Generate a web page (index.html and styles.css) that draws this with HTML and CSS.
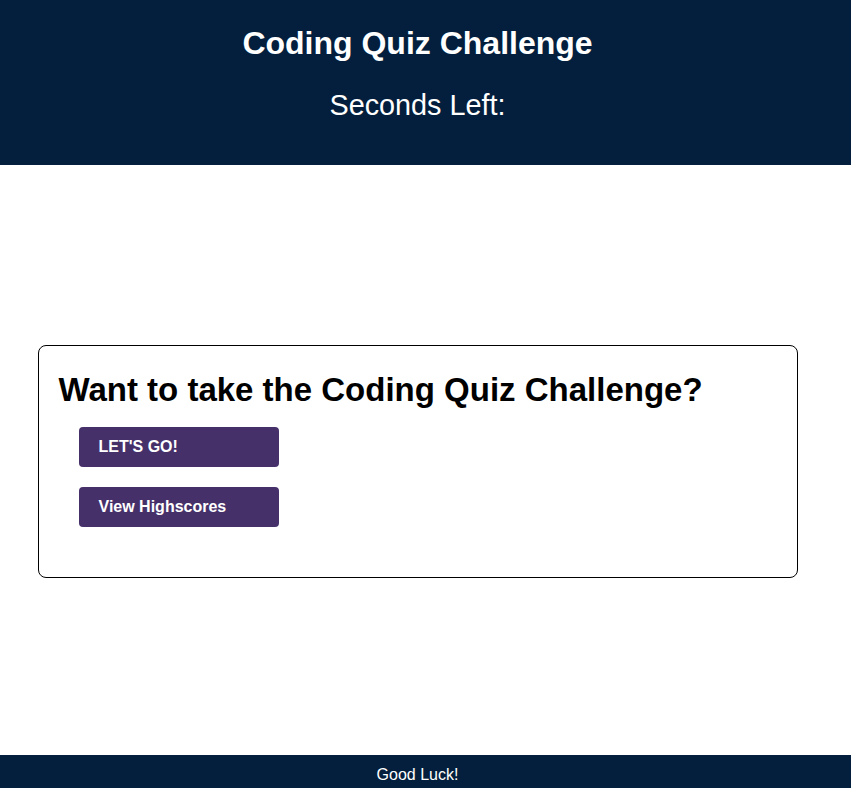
FILE: index.html
```html
<!DOCTYPE html>
<html lang="en">
<head>
<meta charset="utf-8">
<title>Coding Quiz Challenge</title>
<link rel="stylesheet" href="styles.css">
</head>
<body>
<header class="site-header">
  <h1 class="site-title">Coding Quiz Challenge</h1>
  <p class="timer">Seconds Left:</p>
</header>
<main class="main">
  <section class="card">
    <h2 class="card-title">Want to take the Coding Quiz Challenge?</h2>
    <div class="actions">
      <button class="btn" type="button">LET'S GO!</button>
      <button class="btn" type="button">View Highscores</button>
    </div>
  </section>
</main>
<footer class="site-footer">Good Luck!</footer>
</body>
</html>
```

FILE: styles.css
```css
html, body {
  margin: 0;
  padding: 0;
  height: 100%;
}
body {
  font-family: "Liberation Sans", Arial, Helvetica, sans-serif;
  display: flex;
  flex-direction: column;
  min-height: 100vh;
  background: #ffffff;
  color: #000000;
}
.site-header {
  background: #031f3d;
  color: #ffffff;
  text-align: center;
  height: 165px;
  box-sizing: border-box;
  padding: 24.5px 16px 0 0;
}
.site-title {
  font-size: 32px;
  font-weight: 700;
  margin: 0;
}
.timer {
  font-size: 28.8px;
  margin: 27px 0 0;
}
.main {
  flex: 1;
  display: flex;
  align-items: center;
  justify-content: center;
  padding: 3px 16px 0 0;
}
.card {
  box-sizing: border-box;
  width: 760px;
  border: 1px solid #000000;
  border-radius: 8px;
  padding: 25px 20px 50px;
}
.card-title {
  font-size: 33px;
  font-weight: 700;
  margin: 0;
}
.actions {
  display: flex;
  flex-direction: column;
  align-items: flex-start;
  gap: 20px;
  margin: 18px 0 0 20px;
}
.btn {
  width: 200px;
  height: 40px;
  box-sizing: border-box;
  border: none;
  border-radius: 4px;
  background: #46306a;
  color: #ffffff;
  font-family: "Liberation Sans", Arial, Helvetica, sans-serif;
  font-size: 16px;
  font-weight: 700;
  text-align: left;
  padding: 0 20px;
}
.site-footer {
  background: #031f3d;
  color: #ffffff;
  text-align: center;
  font-size: 16px;
  height: 33px;
  box-sizing: border-box;
  padding: 11px 16px 0 0;
}
```
